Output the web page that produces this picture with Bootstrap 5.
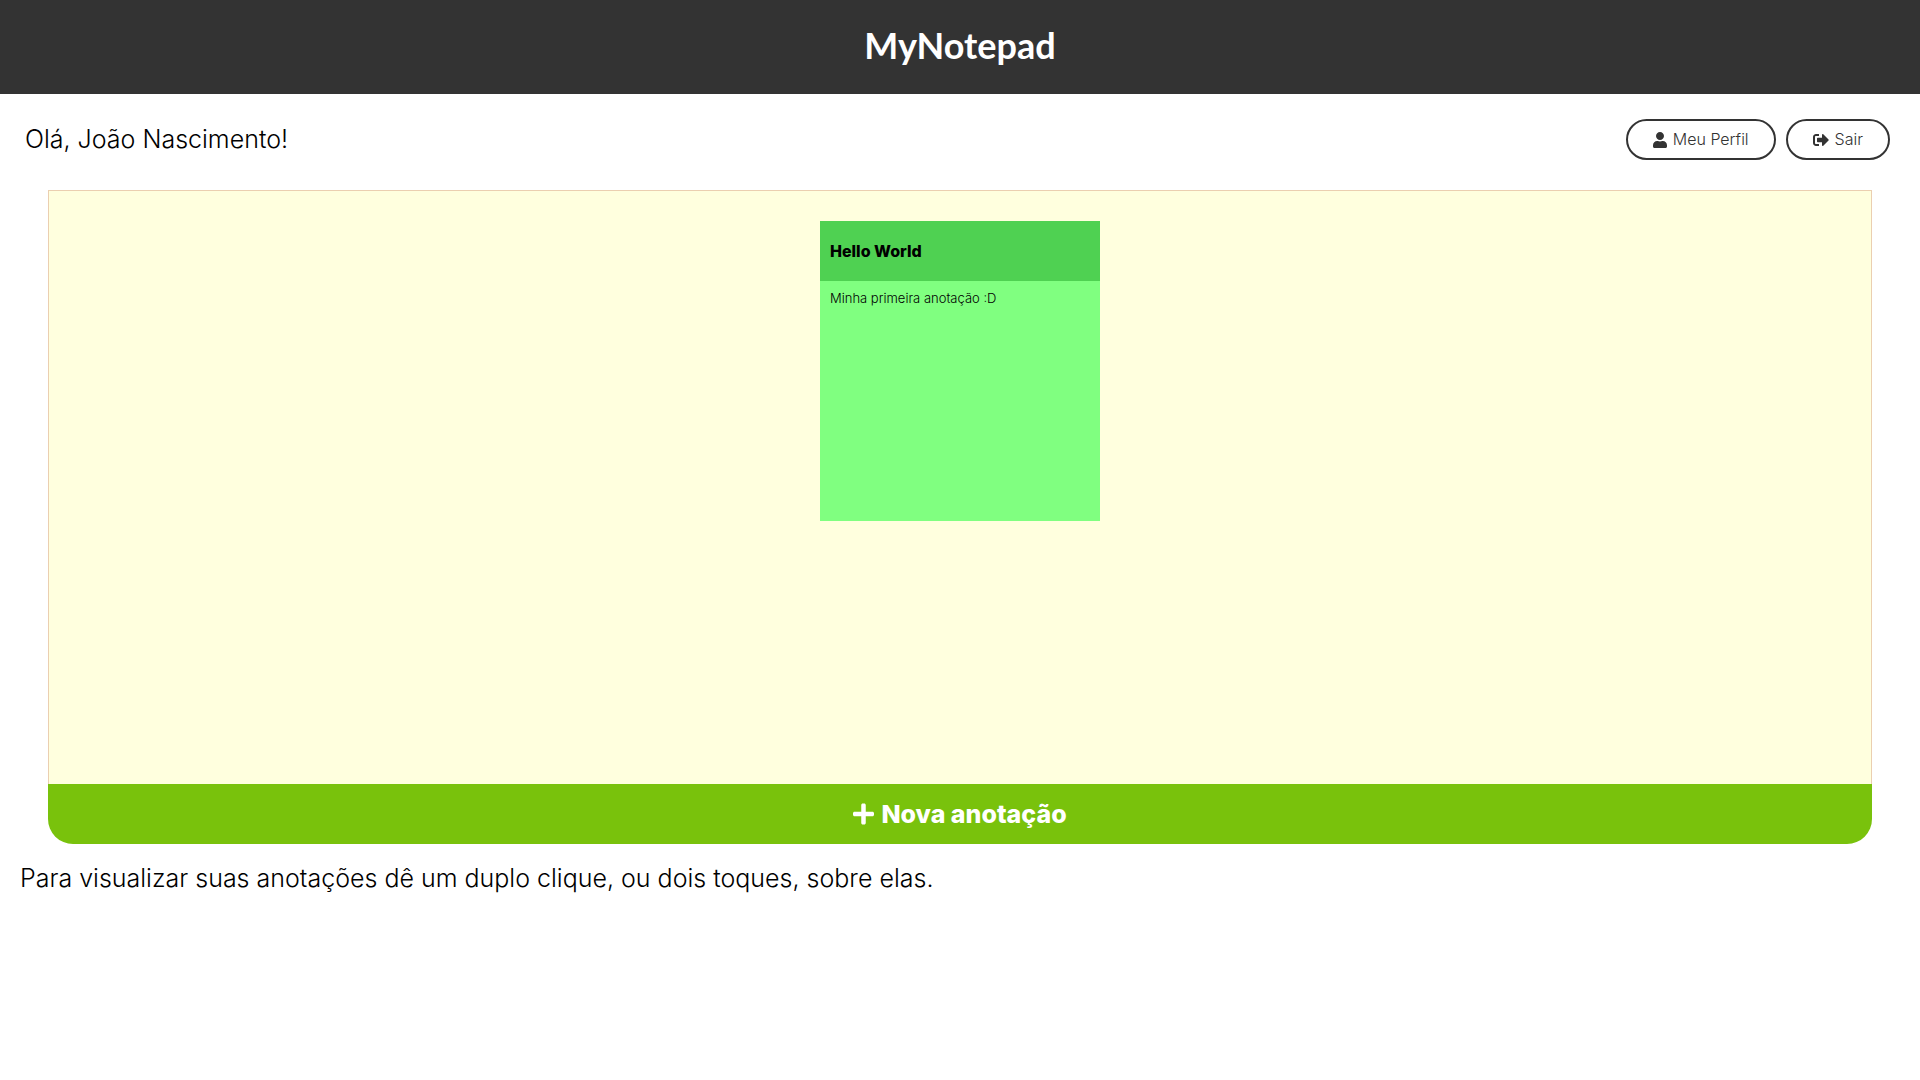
<!DOCTYPE html>
<html lang="pt-BR">
<head>
<meta charset="utf-8">
<meta name="viewport" content="width=device-width, initial-scale=1">
<title>MyNotepad</title>
<link href="https://cdn.jsdelivr.net/npm/bootstrap@5.3.0/dist/css/bootstrap.min.css" rel="stylesheet">
<style>
  body { font-family: Inter, "Open Sans", sans-serif; font-weight: 300; color: #000; }
  .site-header { background: #333; padding: 22px 24px 26px; }
  .brand { font-family: Lato, sans-serif; font-weight: 700; font-size: 36px; line-height: 46px; }
  .topbar { padding: 25px 30px 30px 25px; }
  .actions { gap: 10px; }
  .intro { font-size: 25px; line-height: 41px; }
  .pill { gap: 6px; border: 2px solid #333; border-radius: 25px; padding: 8px 25px; font-size: 16px; line-height: 21px; color: #333; }
  .board { margin: 0 2.5%; }
  .board-notes { min-height: 55vh; padding: 30px; background: #ffffde; border: 1px solid #ebcfb0; border-bottom: 0; }
  .note { width: 280px; min-height: 300px; background: #80ff80; font-size: 13px; line-height: 16px; }
  .note-title { background: #4fd152; font-size: 16px; line-height: 20px; font-weight: 800; padding: 20px 10px; }
  .note-text { padding: 9px 10px; }
  .add-note { background: #79c20c; border-radius: 0 0 25px 25px; font-size: 25px; line-height: 36px; font-weight: 800; padding: 12px; gap: 7px; }
  .hint { padding: 14px 20px; }
</style>
</head>
<body>
<header class="site-header text-center text-white">
  <h1 class="brand m-0">MyNotepad</h1>
</header>
<main>
  <div class="topbar d-flex flex-wrap justify-content-between">
    <p class="intro m-0">Olá, João Nascimento!</p>
    <nav class="actions d-flex">
      <a href="#perfil" class="pill text-decoration-none d-inline-flex align-items-center">
        <svg width="14" height="16" viewBox="0 0 448 512" fill="currentColor" aria-hidden="true"><path d="M224 256c70.7 0 128-57.3 128-128S294.7 0 224 0 96 57.3 96 128s57.3 128 128 128zm89.6 32h-16.7c-22.2 10.2-46.900 16-72.900 16s-50.600-5.800-72.900-16h-16.700C60.200 288 0 348.200 0 422.400V464c0 26.500 21.500 48 48 48h352c26.500 0 48-21.500 48-48v-41.600c0-74.200-60.200-134.400-134.400-134.400z"/></svg>
        Meu Perfil
      </a>
      <a href="#sair" class="pill text-decoration-none d-inline-flex align-items-center">
        <svg width="16" height="16" viewBox="0 0 512 512" fill="currentColor" aria-hidden="true"><path d="M497 273L329 441c-15 15-41 4.500-41-17v-96H152c-13.300 0-24-10.700-24-24v-96c0-13.300 10.700-24 24-24h136V88c0-21.400 25.900-32 41-17l168 168c9.300 9.400 9.300 24.600 0 34zM192 436v-40c0-6.600-5.400-12-12-12H96c-17.700 0-32-14.300-32-32V160c0-17.700 14.300-32 32-32h84c6.600 0 12-5.400 12-12V76c0-6.600-5.400-12-12-12H96c-53 0-96 43-96 96v192c0 53 43 96 96 96h84c6.600 0 12-5.400 12-12z"/></svg>
        Sair
      </a>
    </nav>
  </div>
  <section class="board">
    <div class="board-notes d-flex flex-wrap justify-content-center align-items-start">
      <article class="note">
        <h2 class="note-title m-0">Hello World</h2>
        <p class="note-text m-0">Minha primeira anotação :D</p>
      </article>
    </div>
    <button type="button" class="add-note border-0 w-100 text-white d-flex justify-content-center align-items-center">
      <svg width="21" height="24" viewBox="0 0 448 512" fill="currentColor" aria-hidden="true"><path d="M416 208H272V64c0-17.700-14.300-32-32-32h-32c-17.700 0-32 14.300-32 32v144H32c-17.700 0-32 14.300-32 32v32c0 17.700 14.300 32 32 32h144v144c0 17.700 14.300 32 32 32h32c17.700 0 32-14.300 32-32V304h144c17.700 0 32-14.300 32-32v-32c0-17.700-14.300-32-32-32z"/></svg>
      Nova anotação
    </button>
  </section>
  <p class="intro hint m-0">Para visualizar suas anotações dê um duplo clique, ou dois toques, sobre elas.</p>
</main>
<script src="https://cdn.jsdelivr.net/npm/bootstrap@5.3.0/dist/js/bootstrap.bundle.min.js"></script>
</body>
</html>
